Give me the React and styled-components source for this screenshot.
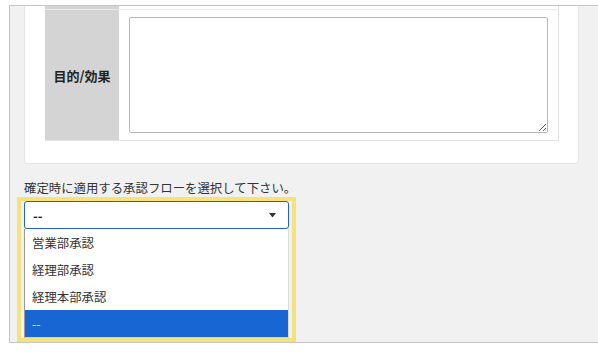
import React from 'react';
import styled, { createGlobalStyle } from 'styled-components';

const GlobalStyle = createGlobalStyle`
  html, body {
    margin: 0;
    padding: 0;
    background: #ffffff;
  }

  body {
    font-family: 'Noto Sans CJK JP', 'Noto Sans', sans-serif;
    color: #333333;
  }
`;

const StyledFrame = styled.div`
  margin: 5px 0 0 9px;
  width: 574px;
  border: 1px solid #c6c6c6;
  background: #f1f1f1;
  overflow: hidden;
  padding-left: 14px;
  box-sizing: content-box;
`;

const Card = styled.div`
  width: 555px;
  box-sizing: border-box;
  background: #ffffff;
  border: 1px solid #e4e4e4;
  border-top: none;
  border-radius: 0 0 4px 4px;
  padding: 0 19px 22px 20px;
`;

const FormTable = styled.div`
  display: grid;
  grid-template-columns: 74px 1fr;
  border-right: 1px solid #e3e3e3;
  border-bottom: 1px solid #e3e3e3;
`;

const LabelCell = styled.div`
  display: flex;
  align-items: center;
  justify-content: center;
  background: #d4d4d4;
  height: ${({ $stub }) => ($stub ? '3px' : 'auto')};
  border-top: ${({ $stub }) => ($stub ? 'none' : '1px solid #e9e9e9')};
  font-size: 13px;
  font-weight: 700;
  color: #222222;
`;

const ValueCell = styled.div`
  height: ${({ $stub }) => ($stub ? '3px' : 'auto')};
  border-top: ${({ $stub }) => ($stub ? 'none' : '1px solid #ebebeb')};
  padding: ${({ $stub }) => ($stub ? '0' : '7px 10px')};
  display: flex;
`;

const TextArea = styled.textarea`
  width: 100%;
  height: 116px;
  box-sizing: border-box;
  border: 1px solid #b8b8b8;
  border-radius: 2px;
  margin: 0;
  padding: 4px;
  font-family: inherit;
  background: #ffffff;
`;

const Prompt = styled.p`
  margin: 15px 0 0;
  font-size: 12.4px;
  line-height: 18px;
  color: #333333;
`;

const Highlight = styled.div`
  margin-left: -7px;
  width: fit-content;
  border: 4px solid #f6e27a;
  padding: 0 3px;
`;

const SelectBox = styled.div`
  display: flex;
  align-items: center;
  justify-content: space-between;
  width: 265px;
  height: 28px;
  box-sizing: border-box;
  border: 1px solid #2462cf;
  border-radius: 3px;
  padding: 0 12px 0 8px;
  background: #ffffff;
  font-size: 13px;
  font-weight: 700;
  color: #222222;
`;

const OptionList = styled.ul`
  list-style: none;
  margin: 0;
  padding: 0;
  width: 265px;
  box-sizing: border-box;
  background: #ffffff;
  border-left: 1px solid #9a9a9a;
  border-right: 1px solid #dcdcdc;
  border-bottom: 1px solid #d0d0d0;
`;

const OptionItem = styled.li`
  height: 27px;
  display: flex;
  align-items: center;
  padding-left: 7px;
  font-size: 12.4px;
  background: ${({ $selected }) => ($selected ? '#1866d3' : '#ffffff')};
  color: ${({ $selected }) => ($selected ? '#dfe9fb' : '#333333')};
`;

const Arrow = () => (
  <svg width="7" height="5" viewBox="0 0 7 5">
    <polygon points="0,0 7,0 3.5,4.5" fill="#333333" />
  </svg>
);

const App = () => {
  const flows = ['営業部承認', '経理部承認', '経理本部承認', '--'];

  return (
    <>
      <GlobalStyle />
      <StyledFrame>
        <Card>
          <FormTable>
            <LabelCell $stub />
            <ValueCell $stub />
            <LabelCell>目的/効果</LabelCell>
            <ValueCell>
              <TextArea />
            </ValueCell>
          </FormTable>
        </Card>

        <Prompt>確定時に適用する承認フローを選択して下さい。</Prompt>

        <Highlight>
          <SelectBox>
            <span>--</span>
            <Arrow />
          </SelectBox>
          <OptionList>
            {flows.map((flow, i) => (
              <OptionItem key={i} $selected={i === flows.length - 1}>
                {flow}
              </OptionItem>
            ))}
          </OptionList>
        </Highlight>
      </StyledFrame>
    </>
  );
};

export default App;
